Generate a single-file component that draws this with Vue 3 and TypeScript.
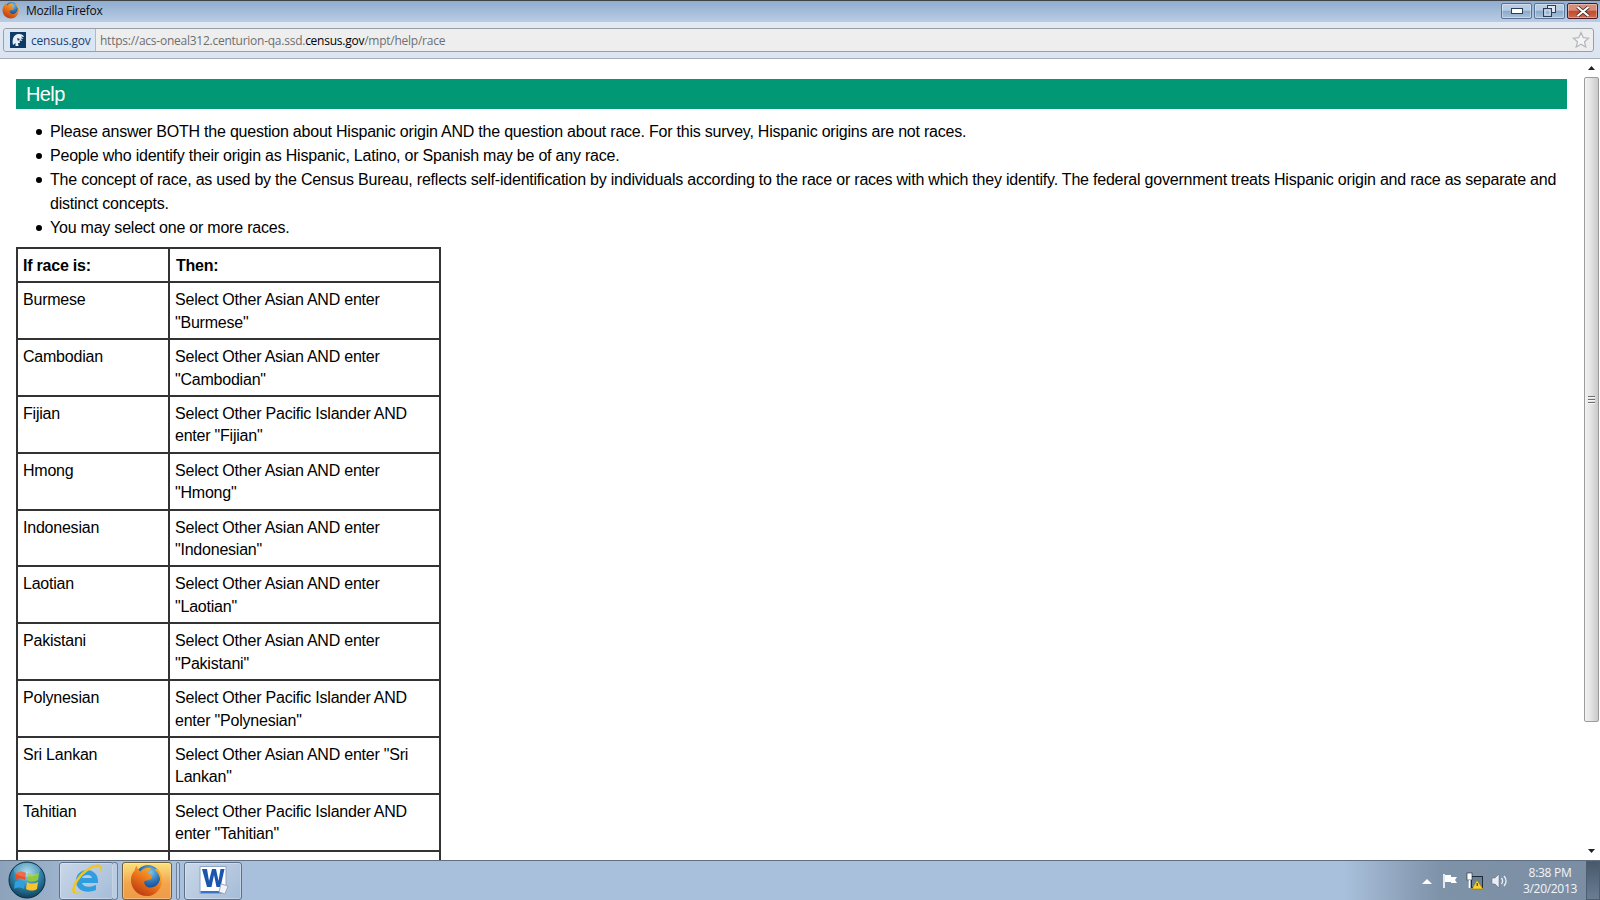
<script setup lang="ts">
interface Row { race: string; then: string }
const intro: string[] = [
  'Please answer BOTH the question about Hispanic origin AND the question about race. For this survey, Hispanic origins are not races.',
  'People who identify their origin as Hispanic, Latino, or Spanish may be of any race.',
  'The concept of race, as used by the Census Bureau, reflects self-identification by individuals according to the race or races with which they identify. The federal government treats Hispanic origin and race as separate and distinct concepts.',
  'You may select one or more races.'
]
const rows: Row[] = [
  { race: 'Burmese', then: 'Select Other Asian AND enter "Burmese"' },
  { race: 'Cambodian', then: 'Select Other Asian AND enter "Cambodian"' },
  { race: 'Fijian', then: 'Select Other Pacific Islander AND enter "Fijian"' },
  { race: 'Hmong', then: 'Select Other Asian AND enter "Hmong"' },
  { race: 'Indonesian', then: 'Select Other Asian AND enter "Indonesian"' },
  { race: 'Laotian', then: 'Select Other Asian AND enter "Laotian"' },
  { race: 'Pakistani', then: 'Select Other Asian AND enter "Pakistani"' },
  { race: 'Polynesian', then: 'Select Other Pacific Islander AND enter "Polynesian"' },
  { race: 'Sri Lankan', then: 'Select Other Asian AND enter "Sri Lankan"' },
  { race: 'Tahitian', then: 'Select Other Pacific Islander AND enter "Tahitian"' }
]
</script>

<template>
  <div class="desktop">
    <svg class="defs" width="0" height="0" aria-hidden="true">
      <defs>
        <radialGradient id="globe" cx="0.6" cy="0.3" r="0.75">
          <stop offset="0" stop-color="#7fc4e8" />
          <stop offset="0.55" stop-color="#2b6fb5" />
          <stop offset="1" stop-color="#123a7c" />
        </radialGradient>
        <linearGradient id="fox" x1="0.8" y1="0" x2="0.2" y2="1">
          <stop offset="0" stop-color="#f9c22e" />
          <stop offset="0.45" stop-color="#ee7a1c" />
          <stop offset="1" stop-color="#b8340f" />
        </linearGradient>
        <radialGradient id="orb" cx="0.5" cy="0.3" r="0.75">
          <stop offset="0" stop-color="#9fd6ea" />
          <stop offset="0.5" stop-color="#2f86ad" />
          <stop offset="1" stop-color="#0a3650" />
        </radialGradient>
        <symbol id="firefox" viewBox="0 0 36 36">
          <circle cx="19" cy="15" r="13" fill="url(#globe)" />
          <path d="M7 3 C8 6 9 8 11 9 C14 5 19 4 23 6 C21 7 19 9 18 11 C21 11 24 13 23 16 C21 19 16 18 15 20 C15 24 20 28 26 25 C30 23 32 20 33 14 C36 25 28 35 18 35 C8 35 1 27 1 18 C1 13 3 10 5 8 C5 6 6 4 7 3 Z" fill="url(#fox)" />
          <path d="M29 6 C33 10 34 15 33 21 C32 15 30 10 26 7 Z" fill="#f5a623" />
        </symbol>
      </defs>
    </svg>

    <header class="titlebar">
      <svg class="title-icon" width="18" height="18"><use href="#firefox" /></svg>
      <span class="title-text">Mozilla Firefox</span>
      <div class="win-buttons">
        <div class="win-btn">
          <svg width="12" height="6" viewBox="0 0 12 6"><rect x="0.5" y="0.5" width="11" height="5" fill="#fff" stroke="#2c3e57" /></svg>
        </div>
        <div class="win-btn">
          <svg width="13" height="12" viewBox="0 0 13 12">
            <rect x="4.5" y="0.5" width="8" height="7" fill="#dfe8f2" stroke="#2c3e57" />
            <rect x="0.5" y="3.5" width="8" height="8" fill="#9db6d2" stroke="#2c3e57" />
            <rect x="2" y="5" width="5" height="5" fill="#9db6d2" stroke="#fff" stroke-width="0.6" />
          </svg>
        </div>
        <div class="win-btn close">
          <svg width="14" height="11" viewBox="0 0 14 11"><path d="M1.5 1 L12.5 10 M12.5 1 L1.5 10" stroke="#3a2a2a" stroke-width="3.6" /><path d="M1.5 1 L12.5 10 M12.5 1 L1.5 10" stroke="#fff" stroke-width="2.2" /></svg>
        </div>
      </div>
    </header>

    <nav class="navbar">
      <div class="urlbar">
        <div class="identity">
          <svg width="16" height="16" viewBox="0 0 16 16">
            <rect width="16" height="16" fill="#103a66" />
            <path d="M3 13 C2 8 3 3 8 2 C11 1.5 14 3 14 5 L11 4.5 L13.5 7 L10.5 6.5 L12.5 9 L9.5 8.5 L10 11 L8 11 L8.5 14 L5.5 14 L5.5 11 Z" fill="#e8eef4" />
            <path d="M7 6 L10 7 L8 9 Z" fill="#103a66" />
          </svg>
          <span>census.gov</span>
        </div>
        <div class="url"><span class="dim">https://acs-oneal312.centurion-qa.ssd.</span><span class="domain">census.gov</span><span class="dim">/mpt/help/race</span></div>
        <svg class="star" width="18" height="18" viewBox="0 0 18 18">
          <path d="M9 1.5 L11.2 6.6 L16.6 7.1 L12.5 10.7 L13.8 16 L9 13.2 L4.2 16 L5.5 10.7 L1.4 7.1 L6.8 6.6 Z" fill="#f5f5f5" stroke="#b4b8bc" stroke-width="1.2" />
        </svg>
      </div>
    </nav>

    <div class="viewport">
      <main class="page">
        <h2 class="help-head">Help</h2>
        <ul class="notes">
          <li v-for="n in intro" :key="n">{{ n }}</li>
        </ul>
        <table class="races">
          <thead>
            <tr><th class="c1">If race is:</th><th class="c2">Then:</th></tr>
          </thead>
          <tbody>
            <tr v-for="r in rows" :key="r.race">
              <td class="c1">{{ r.race }}</td>
              <td class="c2">{{ r.then }}</td>
            </tr>
            <tr class="cut"><td class="c1"></td><td class="c2"></td></tr>
          </tbody>
        </table>
      </main>
      <aside class="scrollbar">
        <div class="arrow"><svg width="7" height="4" viewBox="0 0 7 4"><path d="M0 4 L3.5 0 L7 4 Z" fill="#222" /></svg></div>
        <div class="track">
          <div class="thumb">
            <div class="grip"><i></i><i></i><i></i></div>
          </div>
        </div>
        <div class="arrow"><svg width="7" height="4" viewBox="0 0 7 4"><path d="M0 0 L7 0 L3.5 4 Z" fill="#222" /></svg></div>
      </aside>
    </div>

    <footer class="taskbar">
      <div class="orb-wrap">
        <svg width="38" height="38" viewBox="0 0 38 38">
          <circle cx="19" cy="19" r="18" fill="url(#orb)" stroke="#0d2c44" />
          <path d="M8 12 C11 10 14 10 18 12 L17 19 C14 17 10 17 7 19 Z" fill="#ea4f26" />
          <path d="M20 12 C23 14 26 14 31 12 L30 19 C26 21 23 21 19 19 Z" fill="#92c83e" />
          <path d="M7 21 C10 19 14 19 17 21 L16 28 C13 26 9 26 6 28 Z" fill="#2f9fe0" />
          <path d="M19 21 C22 23 26 23 30 21 L29 28 C26 30 22 30 18 28 Z" fill="#f9c32c" />
          <ellipse cx="19" cy="9" rx="13" ry="7" fill="#fff" opacity="0.18" />
        </svg>
      </div>
      <div class="task ie">
        <svg width="34" height="34" viewBox="0 0 34 34">
          <path d="M17 7 C23 7 28 11 28 18 L28 20 L12 20 C13 24 19 25 26 22 L26 27 C17 31 6 28 6 18 C6 11 11 7 17 7 Z M12 15 L22 15 C22 11 13 11 12 15 Z" fill="#2f9ee0" fill-rule="evenodd" />
          <path d="M30 2 C26 0 15 5 8 14 C3 21 1 27 3 30 C5 32 9 31 13 28 C9 30 6 30 5 28 C4 25 7 19 12 13 C18 7 25 3 29 4 C31 5 31 8 29 11 C32 8 33 4 30 2 Z" fill="#f5c518" />
        </svg>
      </div>
      <div class="sep"></div>
      <div class="task ff">
        <svg width="34" height="34"><use href="#firefox" /></svg>
      </div>
      <div class="sep two"></div>
      <div class="task word">
        <svg width="32" height="30" viewBox="0 0 32 30">
          <path d="M3 1.5 H29 V20 L25 28.5 H3 Z" fill="#fff" stroke="#8aa4c8" />
          <path d="M3.5 26 L3.5 28 L25 28 L26 26 Z" fill="#3a72c4" />
          <path d="M5 4 L10 4 L12 16 L15 4 L19 4 L21.5 16 L23.5 4 L27.5 4 L23.5 22 L19.5 22 L17 10 L14.5 22 L10 22 Z" fill="#1c55ad" />
          <path d="M24 19 L31 21 L28 29 L22 27 Z" fill="#f2f4f8" stroke="#9aa8bc" />
        </svg>
      </div>
      <div class="spacer"></div>
      <div class="tray">
        <svg width="10" height="6" viewBox="0 0 10 6"><path d="M0 6 L5 1 L10 6 Z" fill="#fff" /></svg>
        <svg class="t-flag" width="16" height="16" viewBox="0 0 16 16">
          <path d="M2 1 L2 15" stroke="#fff" stroke-width="1.6" />
          <path d="M3 2 L9 2 L9 4 L15 4 L13 7 L15 10 L9 10 L9 9 L3 9 Z" fill="#fff" />
        </svg>
        <svg class="t-net" width="18" height="18" viewBox="0 0 18 18">
          <rect x="5.5" y="4.5" width="11" height="11" fill="#6a7f98" stroke="#1f2a38" />
          <rect x="1" y="1" width="5" height="7" fill="#fff" stroke="#222" stroke-width="0.6" />
          <path d="M3.5 8 L3.5 16" stroke="#fff" stroke-width="1.6" />
          <path d="M11 8 L17 17 L6 17 Z" fill="#f7d230" stroke="#8a6d00" stroke-width="0.5" />
          <rect x="10.7" y="11" width="1" height="3" fill="#222" />
        </svg>
        <svg class="t-vol" width="17" height="16" viewBox="0 0 17 16">
          <path d="M1 5 L4 5 L8 1 L8 15 L4 11 L1 11 Z" fill="#e9eef4" stroke="#56677c" stroke-width="0.5" />
          <path d="M10.5 5 C12 7 12 9 10.5 11 M13 3 C15.5 6 15.5 10 13 13" fill="none" stroke="#e9eef4" stroke-width="1.3" />
        </svg>
        <div class="clock"><span>8:38 PM</span><span>3/20/2013</span></div>
      </div>
      <div class="show-desktop"></div>
    </footer>
  </div>
</template>

<style scoped>
.desktop {
  width: 1600px;
  height: 900px;
  display: flex;
  flex-direction: column;
  overflow: hidden;
  background: #fff;
  font-family: "Liberation Sans", Arial, sans-serif;
  color: #000;
}
.defs { position: absolute; }

.titlebar {
  height: 22px;
  flex: none;
  box-sizing: border-box;
  border-top: 1px solid #3f4246;
  display: flex;
  align-items: center;
  padding: 0 0 2px 2px;
  background: linear-gradient(#8fadd0, #b9cde4);
}
.title-icon { flex: none; margin-top: -2px; }
.title-text {
  margin-left: 6px;
  font: 12px "Open Sans", "Noto Sans", sans-serif;
  letter-spacing: -0.3px;
  color: #0d0d0d;
}
.win-buttons {
  margin-left: auto;
  display: flex;
  gap: 2px;
  padding-right: 2px;
  align-self: flex-start;
  padding-top: 2px;
}
.win-btn {
  width: 31px;
  height: 16px;
  box-sizing: border-box;
  border: 1px solid #5a7296;
  border-radius: 2px;
  display: flex;
  align-items: center;
  justify-content: center;
  background: linear-gradient(#b7cce3 0 45%, #8ba8c8 50%, #a9c2dc 100%);
  box-shadow: inset 0 0 0 1px rgba(255, 255, 255, 0.35);
}
.win-btn.close {
  border-color: #4d1a2a;
  background: linear-gradient(#d98c78 0 45%, #c04a2c 50%, #cf6a4e 100%);
}

.navbar {
  height: 37px;
  flex: none;
  box-sizing: border-box;
  padding: 6px 6px 0 3px;
  background: linear-gradient(#e2e9f3, #dbe4f0);
  border-bottom: 1px solid #a6aeb8;
}
.urlbar {
  height: 24px;
  box-sizing: border-box;
  display: flex;
  align-items: center;
  background: #eeeeee;
  border: 1px solid #9a9fa6;
  border-radius: 3px;
}
.identity {
  width: 92px;
  height: 100%;
  flex: none;
  box-sizing: border-box;
  display: flex;
  align-items: center;
  gap: 5px;
  padding-left: 6px;
  background: #dbe6f5;
  border-right: 1px solid #a9bbd4;
  font: 12px "Open Sans", "Noto Sans", sans-serif;
  letter-spacing: -0.2px;
  color: #1d3f6e;
  border-radius: 3px 0 0 3px;
}
.url {
  padding-left: 4px;
  font: 12px "Open Sans", "Noto Sans", sans-serif;
  letter-spacing: -0.25px;
  white-space: nowrap;
}
.dim { color: #6e6e6e; }
.domain { color: #000; }
.star { margin-left: auto; margin-right: 3px; }

.viewport {
  flex: 1;
  min-height: 0;
  display: flex;
}
.page {
  flex: 1;
  min-width: 0;
  overflow: hidden;
  box-sizing: border-box;
  padding: 20px 17px 0 16px;
  font-size: 16px;
  letter-spacing: -0.22px;
}
.help-head {
  margin: 0;
  height: 30px;
  padding-left: 10px;
  background: #009875;
  color: #fff;
  font-size: 20px;
  font-weight: 400;
  line-height: 30px;
  letter-spacing: -0.6px;
}
.notes {
  margin: 11px 0 7px;
  padding-left: 34px;
  line-height: 24px;
  list-style: none;
}
.notes li::before {
  content: "";
  display: inline-block;
  width: 6px;
  height: 6px;
  margin: 0 8px 0 -14px;
  border-radius: 50%;
  background: #000;
  vertical-align: 2px;
}
.races {
  border-collapse: collapse;
  width: 425px;
  table-layout: fixed;
  line-height: 22.4px;
}
.races th,
.races td {
  border: 2px solid #333;
  padding: 6px 5px 4px;
  text-align: left;
  vertical-align: top;
  font-size: 16px;
}
.races .c1 { width: 140px; }
.races th.c2 { padding-left: 6px; }
.cut td { height: 44.8px; }

.scrollbar {
  width: 16px;
  flex: none;
  display: flex;
  flex-direction: column;
  background: #f2f2f2;
}
.arrow {
  height: 18px;
  flex: none;
  display: flex;
  align-items: center;
  justify-content: center;
  padding-right: 1px;
  box-sizing: border-box;
  background: #fff;
}
.track {
  flex: 1;
  min-height: 0;
  display: flex;
  flex-direction: column;
  background: #fff;
}
.thumb {
  height: 645px;
  margin: 0 1px 0 0;
  box-sizing: border-box;
  border: 1px solid #9c9c9c;
  border-radius: 2px;
  display: flex;
  align-items: center;
  justify-content: center;
  background: linear-gradient(90deg, #f2f2f2, #e4e4e4 45%, #c9c9c9);
}
.grip {
  width: 7px;
  display: flex;
  flex-direction: column;
  gap: 2px;
}
.grip i {
  display: block;
  height: 1px;
  background: #6e6e6e;
  box-shadow: 0 1px 0 #f6f6f6;
}

.taskbar {
  height: 40px;
  flex: none;
  box-sizing: border-box;
  border-top: 1px solid #5f6f82;
  display: flex;
  align-items: center;
  background: linear-gradient(90deg, #a9c0dc 0 84%, #7e92a8 90%, #7a8da3 100%);
}
.orb-wrap {
  width: 59px;
  flex: none;
  display: flex;
  justify-content: center;
  padding: 0 5px 2px 0;
  box-sizing: border-box;
  background: linear-gradient(90deg, #8da3bb, #9db3cd);
  height: 100%;
  align-items: center;
}
.task {
  height: 38px;
  flex: none;
  box-sizing: border-box;
  border: 1px solid #5e7088;
  border-radius: 3px;
  display: flex;
  align-items: center;
  justify-content: center;
  padding-bottom: 2px;
  background: linear-gradient(135deg, #c9d7e8, #a5bcd8);
  box-shadow: inset 0 0 0 1px rgba(255, 255, 255, 0.3);
}
.task.ie { width: 55px; }
.task.ff {
  width: 50px;
  background: linear-gradient(#fbe27e, #f3a64e 55%, #ef9a47);
  border-color: #6f5f3a;
}
.task.word { width: 58px; }
.sep {
  width: 5px;
  height: 38px;
  flex: none;
  box-sizing: border-box;
  margin: 0 4px 0 -1px;
  border: 1px solid #6c7f97;
  border-left: none;
  border-radius: 0 3px 3px 0;
  background: #b9cce2;
}
.sep.two {
  width: 4px;
  margin: 0 4px 0 4px;
  border-left: 1px solid #6c7f97;
  border-radius: 2px;
}
.spacer { flex: 1; }
.tray {
  display: flex;
  align-items: center;
  height: 100%;
}
.t-flag { margin-left: 10px; }
.t-net { margin-left: 8px; }
.t-vol { margin-left: 7px; }
.clock {
  width: 68px;
  margin-left: 8px;
  display: flex;
  flex-direction: column;
  align-items: center;
  gap: 1px;
  font: 12px/15px "Open Sans", "Noto Sans", sans-serif;
  letter-spacing: -0.3px;
  color: #f2f5f8;
}
.show-desktop {
  width: 14px;
  height: 100%;
  margin-left: 2px;
  flex: none;
  box-sizing: border-box;
  border: 1px solid #4e5d6f;
  background: linear-gradient(#48596c, #6a7d92);
}
</style>
